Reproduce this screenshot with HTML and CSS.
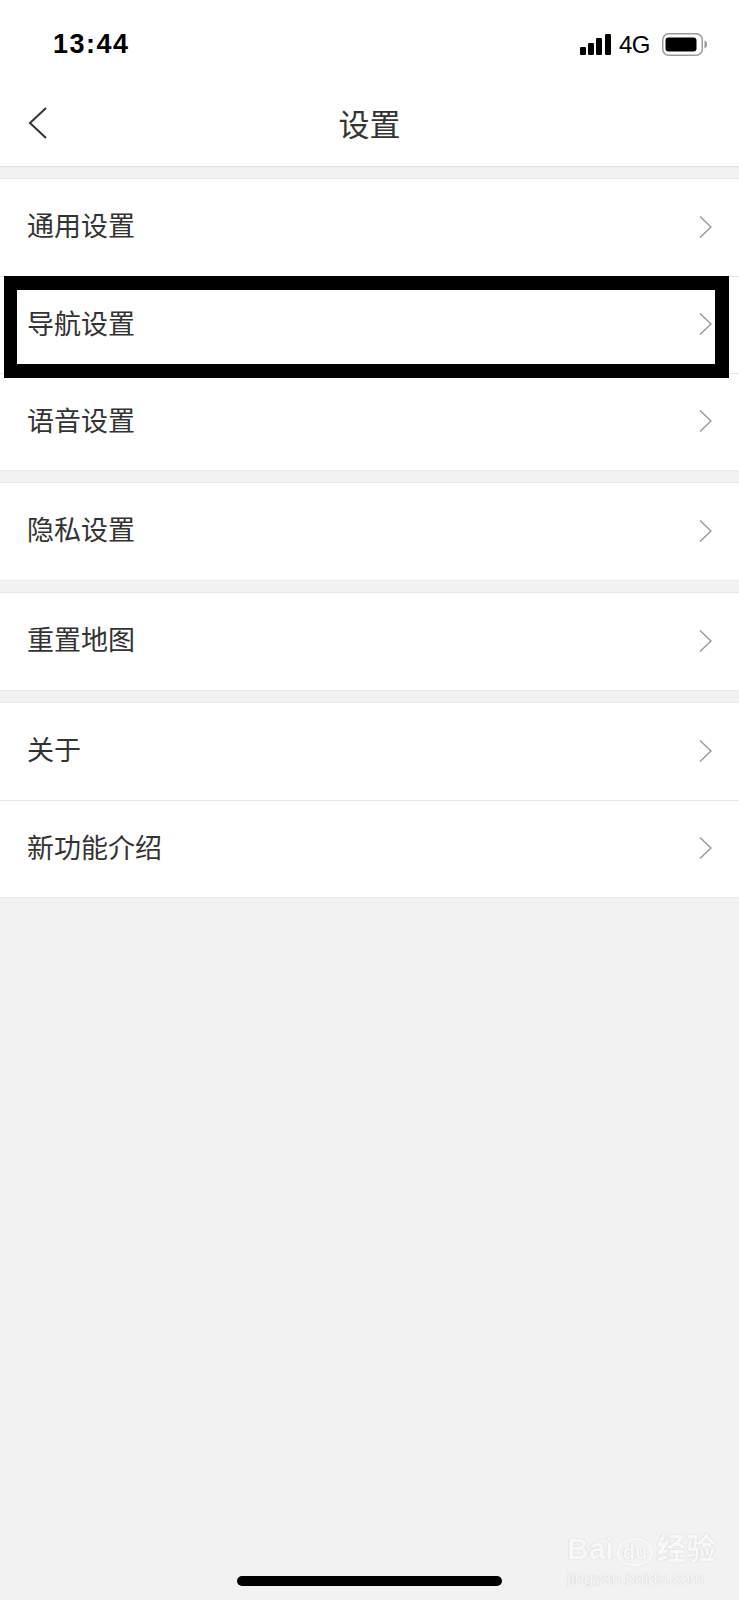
FILE: index.html
```html
<!DOCTYPE html>
<html>
    <head>
        <meta charset='utf-8'>
        <title>设置</title>
        <link rel="stylesheet" href="styles.css">
    </head>
    <body>
        <div class="status-bar">
            <span class="time">13:44</span>
            <div class="status-icons">
                <svg class="signal" width="32" height="21" viewBox="0 0 32 21">
                    <rect x="0" y="13" width="6" height="8" rx="1.2"/>
                    <rect x="8" y="9" width="6" height="12" rx="1.2"/>
                    <rect x="16" y="4" width="6" height="17" rx="1.2"/>
                    <rect x="25" y="0" width="6" height="21" rx="1.2"/>
                </svg>
                <span class="net">4G</span>
                <svg class="battery" width="46" height="23" viewBox="0 0 46 23">
                    <rect x="0.75" y="0.75" width="39.5" height="21.5" rx="6" fill="none" stroke="#9a9a9a" stroke-width="1.5"/>
                    <rect x="3.5" y="4.5" width="31" height="14" rx="3" fill="#000"/>
                    <path d="M42.5 7.5 Q45 8 45 11.5 Q45 15 42.5 15.5 Z" fill="#9a9a9a"/>
                </svg>
            </div>
        </div>
        <div class="nav-bar">
            <svg class="back" width="20" height="34" viewBox="0 0 20 34">
                <polyline points="18,2 2,17 18,32" fill="none" stroke="#333" stroke-width="2"/>
            </svg>
            <span class="title">设置</span>
        </div>

        <div class="group">
            <div class="row"><span>通用设置</span><svg class="arrow" width="14" height="24" viewBox="0 0 14 24"><polyline points="1,1.5 12,12 1,22.5" fill="none" stroke="#999" stroke-width="1.4"/></svg></div>
            <div class="row marked"><span>导航设置</span><svg class="arrow" width="14" height="24" viewBox="0 0 14 24"><polyline points="1,1.5 12,12 1,22.5" fill="none" stroke="#999" stroke-width="1.4"/></svg><div class="mark"></div></div>
            <div class="row"><span>语音设置</span><svg class="arrow" width="14" height="24" viewBox="0 0 14 24"><polyline points="1,1.5 12,12 1,22.5" fill="none" stroke="#999" stroke-width="1.4"/></svg></div>
        </div>
        <div class="group">
            <div class="row"><span>隐私设置</span><svg class="arrow" width="14" height="24" viewBox="0 0 14 24"><polyline points="1,1.5 12,12 1,22.5" fill="none" stroke="#999" stroke-width="1.4"/></svg></div>
        </div>
        <div class="group">
            <div class="row"><span>重置地图</span><svg class="arrow" width="14" height="24" viewBox="0 0 14 24"><polyline points="1,1.5 12,12 1,22.5" fill="none" stroke="#999" stroke-width="1.4"/></svg></div>
        </div>
        <div class="group">
            <div class="row"><span>关于</span><svg class="arrow" width="14" height="24" viewBox="0 0 14 24"><polyline points="1,1.5 12,12 1,22.5" fill="none" stroke="#999" stroke-width="1.4"/></svg></div>
            <div class="row"><span>新功能介绍</span><svg class="arrow" width="14" height="24" viewBox="0 0 14 24"><polyline points="1,1.5 12,12 1,22.5" fill="none" stroke="#999" stroke-width="1.4"/></svg></div>
        </div>

        <div class="watermark">
            <div class="wm-logo">Bai<span class="wm-du">du</span>经验</div>
            <div class="wm-url">jingyan.baidu.com</div>
        </div>
        <div class="home-indicator"></div>
    </body>
</html>
```

FILE: styles.css
```css
html, body {
    margin: 0;
    padding: 0;
}
body {
    position: relative;
    width: 739px;
    min-height: 1600px;
    background: #f2f2f2;
    font-family: "Noto Sans CJK SC", "Noto Sans", sans-serif;
    color: #333;
}
.status-bar {
    height: 88px;
    background: #fff;
    display: flex;
    align-items: center;
    justify-content: space-between;
    padding: 0 31px 0 53px;
    box-sizing: border-box;
}
.time {
    font: bold 27px/1 "Liberation Sans", sans-serif;
    letter-spacing: 1.5px;
    color: #000;
}
.status-icons {
    display: flex;
    align-items: center;
}
.signal {
    margin-top: 1px;
    margin-left: 2px;
}
.net {
    font: 24px/1 "Liberation Sans", sans-serif;
    letter-spacing: -0.5px;
    color: #000;
    margin: 1px 12px 0 7px;
}
.nav-bar {
    position: relative;
    height: 79px;
    background: #fff;
    border-bottom: 1px solid #e0e0e0;
    display: flex;
    align-items: center;
    justify-content: center;
    padding-bottom: 10px;
    box-sizing: border-box;
}
.back {
    position: absolute;
    left: 28px;
    top: 18px;
}
.title {
    font-size: 31px;
    line-height: 1;
    color: #333;
}
.group {
    margin-top: 11px;
    background: #fff;
    border-top: 1px solid #e8e8e8;
    border-bottom: 1px solid #e8e8e8;
}
.group:first-of-type {
    margin-top: 12px;
}
.row {
    position: relative;
    height: 97px;
    display: flex;
    align-items: center;
    justify-content: space-between;
    padding: 0 26px 0 27px;
    box-sizing: border-box;
    font-size: 27px;
    color: #333;
}
.row + .row {
    border-top: 1px solid #e5e5e5;
}
.row span {
    line-height: 1;
    margin-bottom: 6px;
}
.arrow {
    margin-bottom: 2px;
}
.mark {
    position: absolute;
    z-index: 1;
    left: 4px;
    top: -1px;
    width: 725px;
    height: 102px;
    box-sizing: border-box;
    border: 14px solid #000;
    border-left-width: 13px;
}
.watermark {
    position: absolute;
    left: 567px;
    top: 1518px;
    color: #f8f8f8;
    text-shadow: 0 0 1px #d0d0d0, 0 0 1px #d0d0d0;
}
.wm-logo {
    font: bold 30px/1 "Liberation Sans", "Noto Sans CJK SC", sans-serif;
    padding-top: 16px;
}
.wm-du {
    display: inline-block;
    font-size: 20px;
    border: 2px solid #f8f8f8;
    border-radius: 50% 50% 45% 45%;
    padding: 2px 4px;
    margin: 0 3px;
    box-shadow: 0 0 1px #d0d0d0;
}
.wm-url {
    font: 17px/1 "Liberation Sans", sans-serif;
    margin-top: 4px;
}
.home-indicator {
    position: absolute;
    left: 237px;
    top: 1576px;
    width: 265px;
    height: 10px;
    border-radius: 5px;
    background: #000;
}
```
